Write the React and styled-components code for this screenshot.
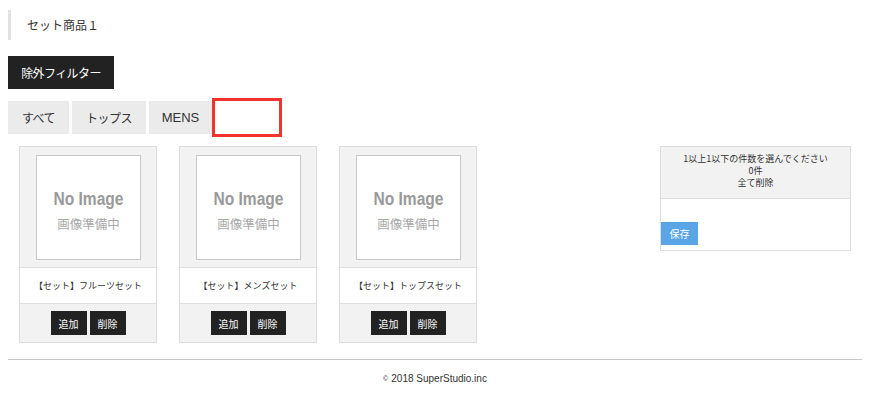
import React from "react";
import styled, { createGlobalStyle } from "styled-components";

const Global = createGlobalStyle`
  html, body { margin: 0; padding: 0; background: #fff; }
  body { font-family: "Noto Sans CJK JP", "Liberation Sans", sans-serif; color: #333; }
  * { box-sizing: border-box; }
`;

const Page = styled.div`
  padding: 10px 8px 0;
`;

const Title = styled.div`
  height: 30px;
  border-left: 3px solid #e2e2e2;
  padding-left: 16px;
  font-size: 12px;
  line-height: 30px;
  color: #333;
`;

const FilterButton = styled.button`
  display: block;
  margin-top: 16px;
  width: 106px;
  height: 33px;
  padding: 0;
  border: none;
  background: #222;
  color: #fff;
  font-family: inherit;
  font-size: 12px;
  letter-spacing: -0.6px;
`;

const Tabs = styled.div`
  display: flex;
  gap: 3px;
  margin-top: 12px;
`;

const Tab = styled.div`
  width: ${(p) => p.$w}px;
  height: 33px;
  display: flex;
  align-items: center;
  justify-content: center;
  background: ${(p) => (p.$active ? "#fff" : "#ebebeb")};
  outline: ${(p) => (p.$active ? "3px solid #f0332c" : "none")};
  font-family: ${(p) => (p.$latin ? '"Liberation Sans", sans-serif' : "inherit")};
  font-size: ${(p) => (p.$latin ? 13 : 12)}px;
  letter-spacing: ${(p) => (p.$latin ? 0 : -0.5)}px;
  color: #333;
`;

const Content = styled.div`
  display: flex;
  justify-content: space-between;
  align-items: flex-start;
  margin-top: 12px;
  padding: 0 11px;
`;

const Cards = styled.div`
  display: flex;
  gap: 22px;
`;

const Card = styled.div`
  width: 138px;
  border: 1px solid #ddd;
`;

const ImageArea = styled.div`
  background: #f2f2f2;
  padding: 8px 15px 7px;
  border-bottom: 1px solid #ddd;
  display: flex;
  justify-content: center;
`;

const Placeholder = styled.svg`
  display: block;
  width: 105px;
  height: 105px;
`;

const Name = styled.div`
  height: 36px;
  border-bottom: 1px solid #ddd;
  display: flex;
  align-items: center;
  justify-content: center;
  font-size: 9px;
  color: #333;
  white-space: nowrap;
`;

const Actions = styled.div`
  background: #f2f2f2;
  display: flex;
  justify-content: center;
  gap: 3px;
  padding: 7px 0 7px;
`;

const SmallButton = styled.button`
  width: 36px;
  height: 24px;
  border: none;
  padding: 0;
  background: #222;
  color: #fff;
  font-family: inherit;
  font-size: 10px;
`;

const Panel = styled.div`
  width: 191px;
  border: 1px solid #ddd;
`;

const PanelHead = styled.div`
  height: 52px;
  background: #f2f2f2;
  border-bottom: 1px solid #ddd;
  padding-top: 6px;
  text-align: center;
  font-size: 9px;
  line-height: 12px;
  color: #333;
`;

const PanelBody = styled.div`
  padding: 23px 0 5px;
`;

const SaveButton = styled.button`
  display: block;
  width: 37px;
  height: 23px;
  border: none;
  padding: 0;
  background: #5aa5e6;
  color: #fff;
  font-family: inherit;
  font-size: 10px;
`;

const Footer = styled.footer`
  margin-top: 16px;
  border-top: 1px solid #c8c8c8;
  padding-top: 13px;
  text-align: center;
  font-family: "Liberation Sans", sans-serif;
  font-size: 10px;
  color: #333;
`;

const Copy = styled.span`
  font-size: 7px;
  margin-right: 3px;
  vertical-align: 1px;
`;

const products = ["【セット】フルーツセット", "【セット】メンズセット", "【セット】トップスセット"];

function NoImage() {
  return (
    <Placeholder viewBox="0 0 105 105">
      <rect x="0.5" y="0.5" width="104" height="104" fill="#fff" stroke="#c8c8c8" />
      <text
        x="52.5"
        y="50"
        textAnchor="middle"
        textLength="70"
        lengthAdjust="spacingAndGlyphs"
        fontFamily="'Liberation Sans', sans-serif"
        fontWeight="bold"
        fontSize="18"
        fill="#9a9a9a"
      >
        No Image
      </text>
      <text
        x="52.5"
        y="74"
        textAnchor="middle"
        fontFamily="'Noto Sans CJK JP', sans-serif"
        fontSize="12.5"
        fill="#a8a8a8"
      >
        画像準備中
      </text>
    </Placeholder>
  );
}

export default function App() {
  return (
    <>
      <Global />
      <Page>
        <Title>セット商品１</Title>
        <FilterButton>除外フィルター</FilterButton>
        <Tabs>
          <Tab $w={61}>すべて</Tab>
          <Tab $w={74}>トップス</Tab>
          <Tab $w={63} $latin>MENS</Tab>
          <Tab $w={64} $active />
        </Tabs>
        <Content>
          <Cards>
            {products.map((p) => (
              <Card key={p}>
                <ImageArea>
                  <NoImage />
                </ImageArea>
                <Name>{p}</Name>
                <Actions>
                  <SmallButton>追加</SmallButton>
                  <SmallButton>削除</SmallButton>
                </Actions>
              </Card>
            ))}
          </Cards>
          <Panel>
            <PanelHead>
              <div>1以上1以下の件数を選んでください</div>
              <div>0件</div>
              <div>全て削除</div>
            </PanelHead>
            <PanelBody>
              <SaveButton>保存</SaveButton>
            </PanelBody>
          </Panel>
        </Content>
        <Footer>
          <Copy>©</Copy>2018 SuperStudio.inc
        </Footer>
      </Page>
    </>
  );
}
